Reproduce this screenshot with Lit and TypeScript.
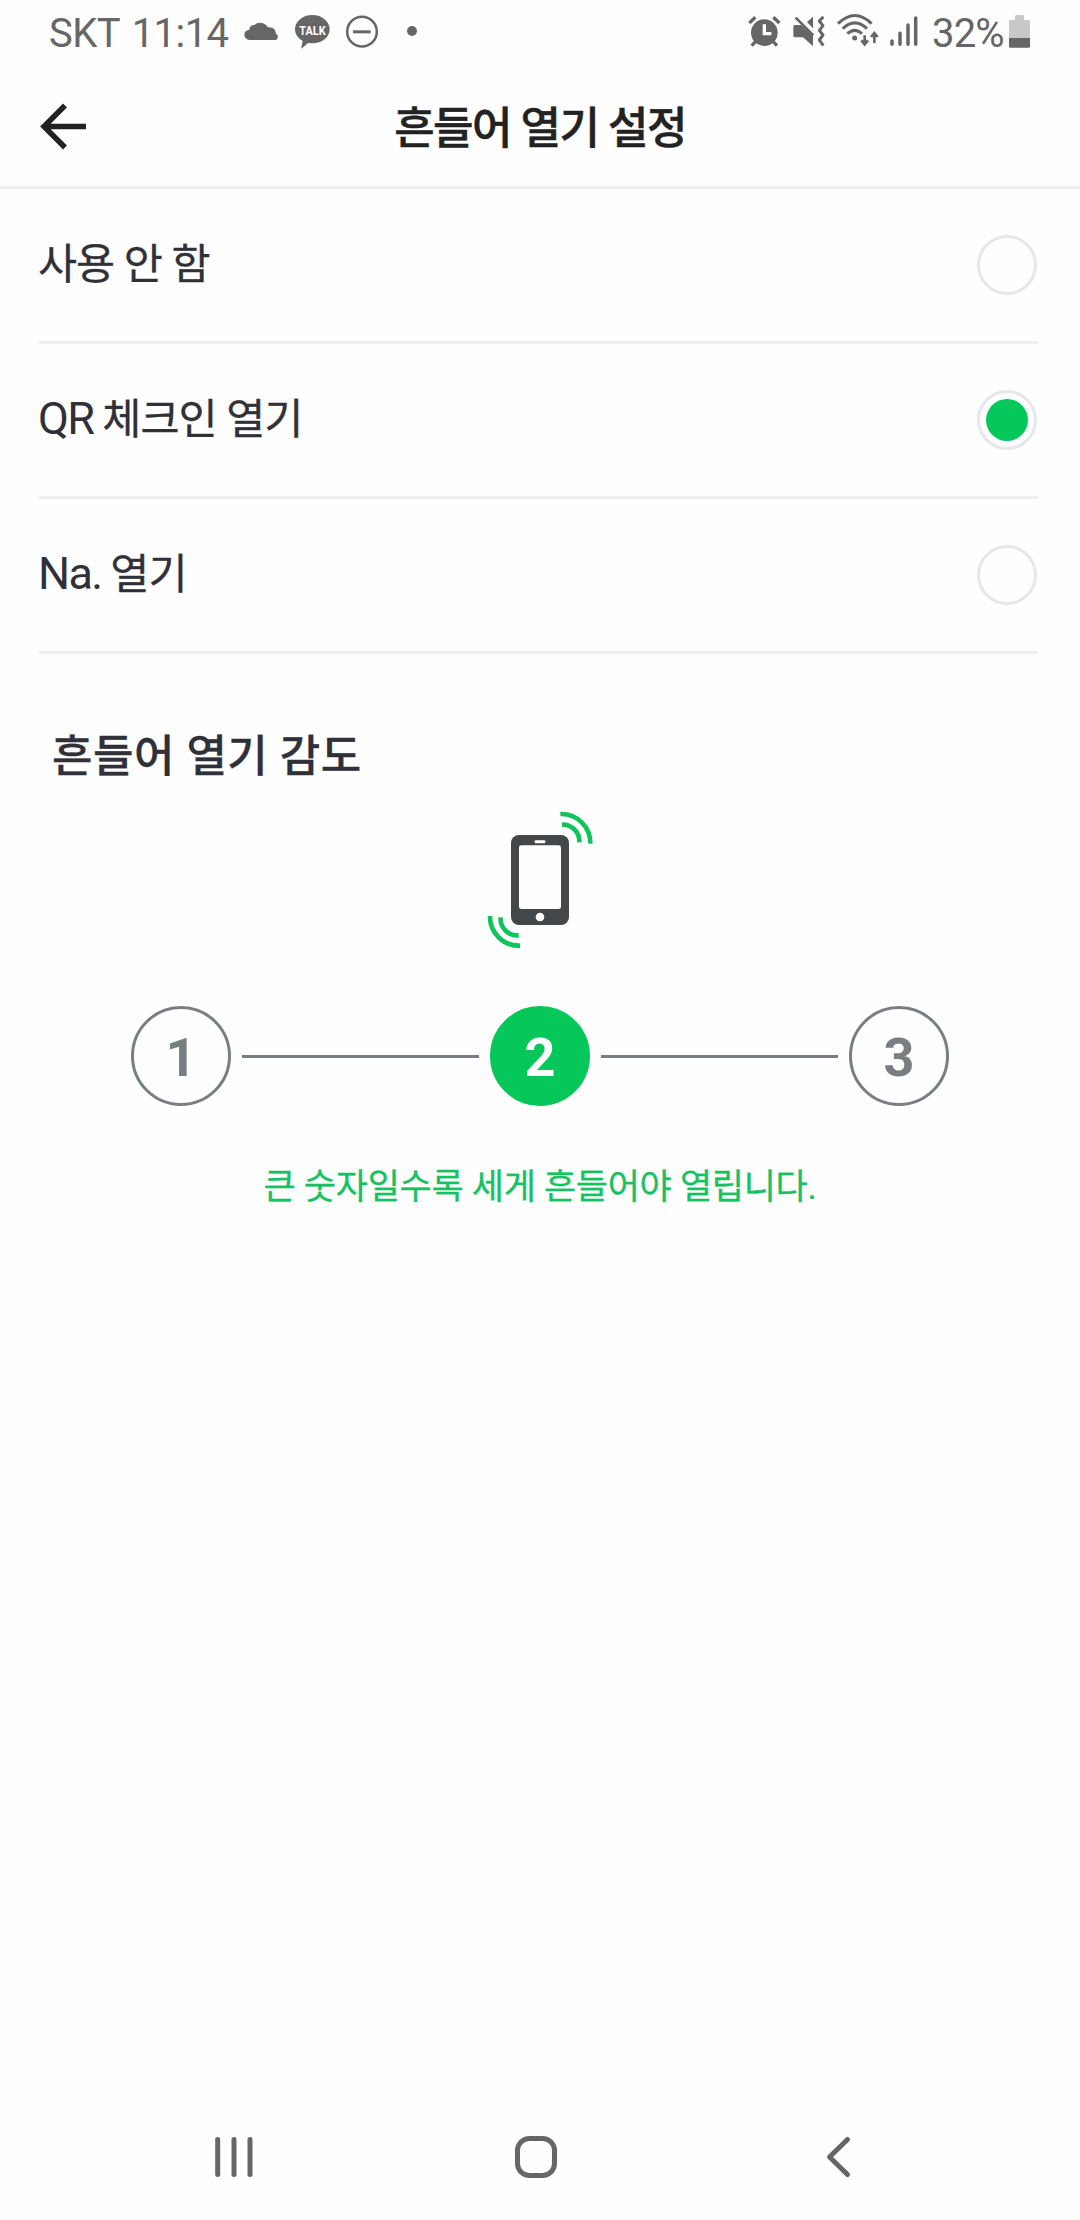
import { LitElement, html, css, svg } from "lit";
import { customElement, property, state } from "lit/decorators.js";
import { classMap } from "lit/directives/class-map.js";

@customElement("status-bar")
class StatusBar extends LitElement {
  static styles = css`
    :host {
      display: flex;
      justify-content: space-between;
      height: 64px;
      padding: 0 50px 0 49px;
      color: #666;
      font-size: 40px;
      line-height: 60px;
    }
    .group { display: flex; }
    .carrier { width: 196px; padding-top: 4px; white-space: nowrap; letter-spacing: -0.55px; word-spacing: 3px; }
    .battery-text { width: 77px; padding-top: 4px; white-space: nowrap; letter-spacing: -0.8px; }
    svg { display: block; height: 64px; fill: #666; flex: none; overflow: visible; }
    .line { fill: none; stroke: #666; }
    .cloud { width: 34px; margin-right: 16px; }
    .talk { width: 35px; margin-right: 16px; }
    .dnd { width: 32px; margin-right: 29px; }
    .dot { width: 10px; }
    .alarm { width: 33px; margin-right: 12px; }
    .mute { width: 32px; margin-right: 12px; }
    .wifi { width: 42px; margin-right: 11px; }
    .signal { width: 28px; margin-right: 14px; }
    .battery { width: 21px; }
    .talk-label { fill: #fff; font: 700 40px Roboto, sans-serif; }
  `;
  render() {
    return html`
      <div class="group">
        <span class="carrier">SKT 11:14</span>
        <svg class="cloud" viewBox="645 0 102 192">
          <path d="M659 120a15.500 15.500 0 0 1-1-31q1-14 15-14a27 27 0 0 1 41 7q21-3 24 19a10.500 10.500 0 0 1-1 19z" />
        </svg>
        <svg class="talk" viewBox="794 0 105 192">
          <path d="M846 45c29 0 52 19 52 43s-23 42-52 42c-5 0-9 0-13-1l-18 16c-3 2-2 0-2-2l4-20c-14-8-23-21-23-35 0-24 23-43 52-43z" />
          <text class="talk-label" x="807" y="105" textLength="79" lengthAdjust="spacingAndGlyphs">TALK</text>
        </svg>
        <svg class="dnd" viewBox="948 0 96 192">
          <circle class="line" cx="996" cy="95" r="44.500" stroke-width="7.500" />
          <rect x="969" y="91" width="53" height="9" />
        </svg>
        <svg class="dot" viewBox="1131 0 30 192"><circle cx="1146" cy="93" r="15" /></svg>
      </div>
      <div class="group">
        <svg class="alarm" viewBox="53 0 99 192">
          <circle cx="102" cy="98" r="40" />
          <path class="line" stroke-width="10" d="M57 69l18-17M147 69l-18-17M76 124l-12 13M128 124l12 13" />
          <path d="M97 73h10v23h16v10H97z" fill="#fff" />
        </svg>
        <svg class="mute" viewBox="189 0 96 192">
          <path d="M195 75h19l35 34v30l-30-27h-24q-5 0-5-5V80q0-5 5-5zM231 66l18-16v35z" />
          <path class="line" stroke-width="8" d="M197 53l53 53" />
          <path class="line" stroke-width="9" d="M280 50l-12 13 11 14-11 14 11 14-11 15 12 17" stroke-linejoin="round" />
        </svg>
        <svg class="wifi" viewBox="320 0 126 192">
          <path class="line" stroke-width="9" d="M323 71q51-49 101 0M337 86q37-35 73 0M351 101q22-20 44 0" />
          <circle cx="373" cy="114" r="7.500" />
          <path class="line" stroke-width="8" d="M403 106v26M393 121l10 12 10-12M432 129v-28M422 111l10-12 10 12" />
        </svg>
        <svg class="signal" viewBox="479 0 84 192">
          <path class="line" stroke-width="10.500" stroke-linecap="round" d="M485 123v10M509 100v33M533 75v58M556 54v79" />
        </svg>
        <span class="battery-text">32%</span>
        <svg class="battery" viewBox="837 0 63 192">
          <path fill="#c8c8c8" d="M855 60V49q0-4 4-4h19q4 0 4 4v11h14q4 0 4 4v50h-63V64q0-4 4-4z" />
          <path d="M837 114h63v25q0 4-4 4h-55q-4 0-4-4z" />
        </svg>
      </div>
    `;
  }
}

@customElement("option-row")
class OptionRow extends LitElement {
  @property() latin = "";
  @property() label = "";
  @property({ type: Boolean }) selected = false;
  static styles = css`
    :host {
      display: flex;
      align-items: center;
      justify-content: space-between;
      box-sizing: border-box;
      height: 155px;
      padding-right: 1px;
      border-bottom: 3px solid #eee;
      color: #303038;
      font-size: 45px;
      line-height: 60px;
    }
    .text { display: flex; align-items: baseline; gap: 9px; margin: -2px 0 0 -1px; }
    .latin { letter-spacing: -1.7px; }
    .label { font-size: 42.5px; letter-spacing: -1px; padding-top: 2px; -webkit-text-stroke: 0.3px #303038; }
    .radio {
      display: grid;
      place-items: center;
      box-sizing: border-box;
      width: 60px;
      height: 60px;
      border: 3px solid #e7e7eb;
      border-radius: 50%;
    }
    .mark { width: 42px; height: 42px; border-radius: 50%; background: #05c75a; }
  `;
  render() {
    return html`<span class="text">
        ${this.latin ? html`<span class="latin">${this.latin}</span>` : ""}
        <span class="label">${this.label}</span>
      </span>
      <span class="radio">${this.selected ? html`<span class="mark"></span>` : ""}</span>`;
  }
}

@customElement("app-root")
class AppRoot extends LitElement {
  @state() mode = 1;
  @state() level = 2;

  static styles = css`
    :host {
      display: flex;
      flex-direction: column;
      box-sizing: border-box;
      width: 1080px;
      height: 2220px;
      background: #fefefe;
      font-family: Roboto, "Noto Sans CJK KR", sans-serif;
    }
    svg { display: block; flex: none; }
    .header {
      display: grid;
      grid-template-columns: 90px 1fr 90px;
      align-items: center;
      box-sizing: border-box;
      height: 125px;
      border-bottom: 3px solid #eee;
    }
    .back { margin-left: 38px; margin-top: 3px; width: 52px; height: 52px; }
    .title {
      margin: 8px 0 0;
      text-align: center;
      color: #222;
      font-size: 44px;
      line-height: 60px;
      font-weight: 500;
      letter-spacing: -1.5px;
      -webkit-text-stroke: 0.5px #222;
    }
    .options { display: flex; flex-direction: column; margin: 0 42px 0 39px; }
    .subtitle {
      margin: 70px 0 0 52px;
      color: #303038;
      font-size: 44px;
      line-height: 66px;
      font-weight: 500;
      letter-spacing: 0.5px;
      -webkit-text-stroke: 0.3px #303038;
    }
    .phone { width: 140px; height: 170px; margin: 0 auto; }
    .steps { display: flex; align-items: center; gap: 11px; margin: 46px 131px 0; }
    .step {
      display: flex;
      align-items: center;
      justify-content: center;
      box-sizing: border-box;
      width: 100px;
      height: 100px;
      border: 3px solid #7a7e80;
      border-radius: 50%;
      color: #7a7e80;
      font-size: 54px;
      line-height: 60px;
      font-weight: 700;
      padding-top: 4px;
    }
    .active { background: #05c75a; border-color: #05c75a; color: #fff; }
    .rail { flex: 1; height: 3px; background: #7a7e80; position: relative; top: 0.5px; }
    .hint {
      margin: 55px 0 0;
      text-align: center;
      color: #16c161;
      font-size: 35px;
      line-height: 54px;
      letter-spacing: -0.3px;
      -webkit-text-stroke: 0.3px #16c161;
    }
    .nav {
      display: flex;
      align-items: center;
      margin-top: auto;
      height: 126px;
      padding-left: 214px;
    }
    .nav-icon { fill: none; stroke: #666; stroke-width: 5; stroke-linecap: round; stroke-linejoin: round; }
    .recent { width: 40px; height: 44px; margin-right: 260px; }
    .home { width: 44px; height: 44px; margin-right: 266px; }
    .prev { width: 30px; height: 44px; }
  `;

  private renderStep(n: number) {
    return html`${n > 1 ? html`<div class="rail"></div>` : ""}
      <div class=${classMap({ step: true, active: this.level === n })} @click=${() => (this.level = n)}>${n}</div>`;
  }

  render() {
    const options = [
      { latin: "", label: "사용 안 함" },
      { latin: "QR", label: "체크인 열기" },
      { latin: "Na.", label: "열기" },
    ];
    const waves = svg`
      <path d="M271 72A87 87 0 0 1 361 161M276 104A50 50 0 0 1 328 157" fill="none" stroke="#10c45b" stroke-width="14" />
      <path d="M60 378A87 87 0 0 0 150 467M92 382A50 50 0 0 0 146 436" fill="none" stroke="#10c45b" stroke-width="14" />`;
    return html`
      <status-bar></status-bar>
      <header class="header">
        <svg class="back" viewBox="38 101 52 52">
          <path d="M86 126.500H43M65 105.500L44 126.500L65 147.500" fill="none" stroke="#222" stroke-width="5.500" />
        </svg>
        <h1 class="title">흔들어 열기 설정</h1>
      </header>
      <section class="options">
        ${options.map(
          (o, i) => html`<option-row .latin=${o.latin} .label=${o.label} .selected=${this.mode === i} @click=${() => (this.mode = i)}></option-row>`
        )}
      </section>
      <h2 class="subtitle">흔들어 열기 감도</h2>
      <svg class="phone" viewBox="0 0 420 510">
        <rect x="123" y="135" width="174" height="270" rx="24" fill="#43474a" />
        <rect x="147" y="166" width="126" height="191" rx="7" fill="#fefefe" />
        <rect x="194" y="151" width="32" height="9" rx="3" fill="#fefefe" />
        <circle cx="210" cy="381" r="13" fill="#fefefe" />
        ${waves}
      </svg>
      <div class="steps">${[1, 2, 3].map((n) => this.renderStep(n))}</div>
      <p class="hint">큰 숫자일수록 세게 흔들어야 열립니다.</p>
      <nav class="nav">
        <svg class="recent nav-icon" viewBox="214 2135 40 44"><path d="M217.700 2139.500v35M234 2139.500v35M250 2139.500v35" /></svg>
        <svg class="home nav-icon" viewBox="514 2135 44 44"><rect x="517.500" y="2138.500" width="37" height="37" rx="12" /></svg>
        <svg class="prev nav-icon" viewBox="824 2135 30 44"><path d="M847.500 2139.500L829.500 2157l18 17.500" /></svg>
      </nav>
    `;
  }
}
